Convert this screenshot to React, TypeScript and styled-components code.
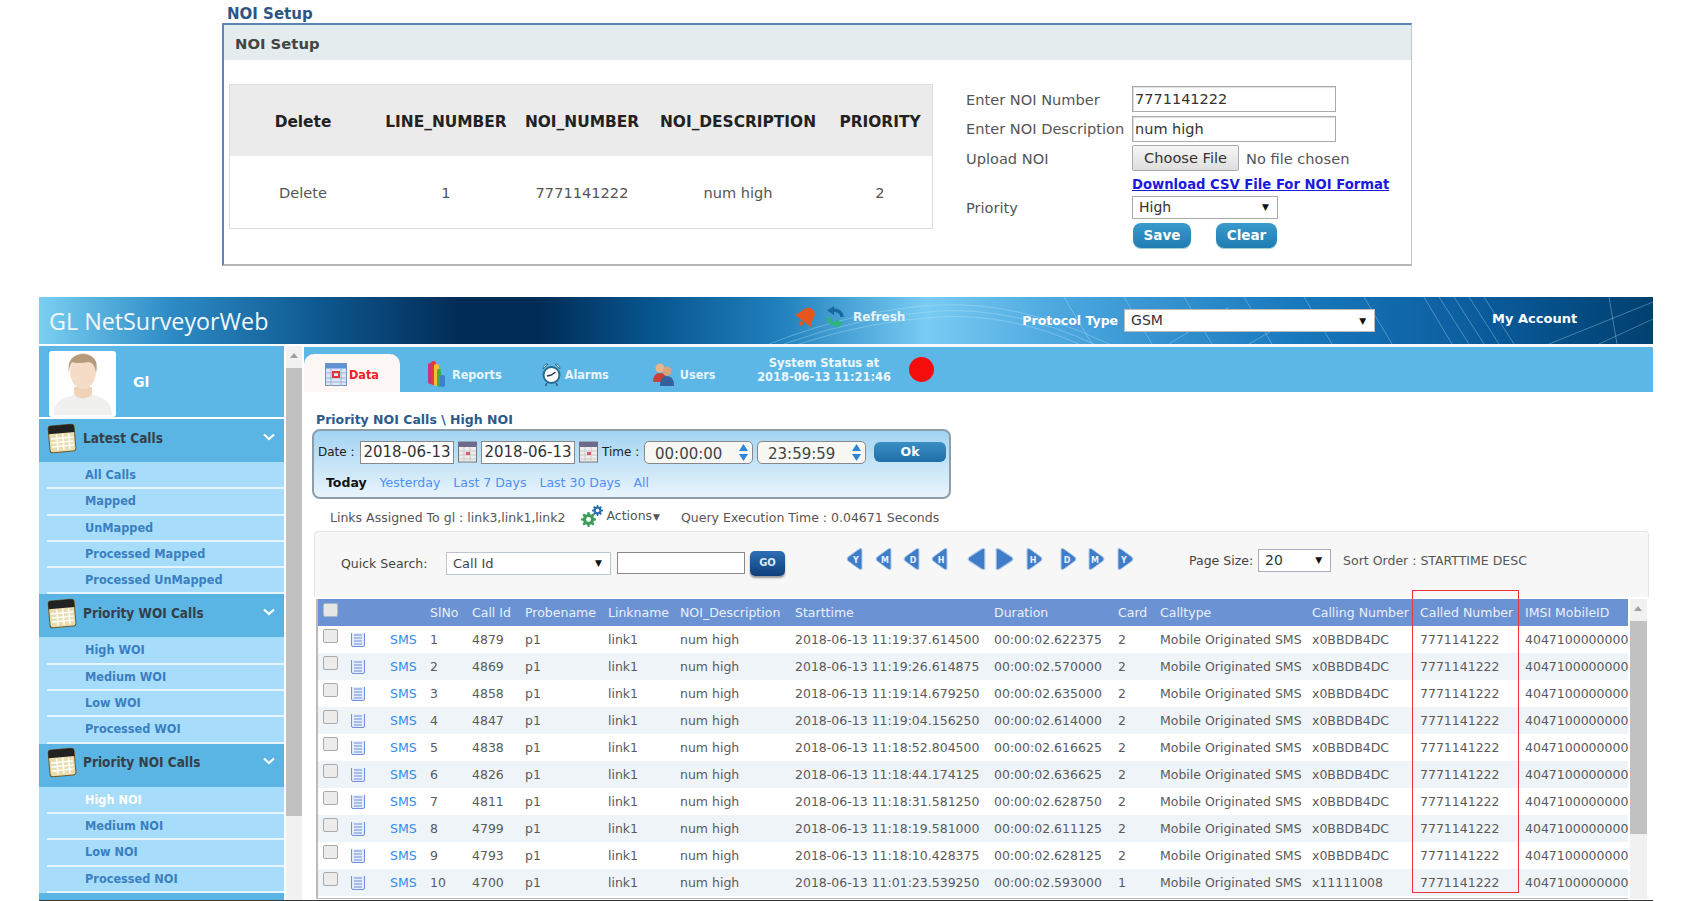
import styled, { createGlobalStyle } from 'styled-components'
import { ReactNode } from 'react'

const GlobalStyle = createGlobalStyle`
  html, body {
    margin: 0;
    padding: 0;
    height: 901px;
    overflow: hidden;
    background: #fff;
    font-family: "DejaVu Sans", Verdana, sans-serif;
    color: #555;
  }
  * { box-sizing: border-box; }
`

const condensed = '"DejaVu Sans Condensed", "DejaVu Sans", sans-serif'

const rows = [
  ['1', '4879', '11:19:37.614500', '02.622375', '2', 'x0BBDB4DC'],
  ['2', '4869', '11:19:26.614875', '02.570000', '2', 'x0BBDB4DC'],
  ['3', '4858', '11:19:14.679250', '02.635000', '2', 'x0BBDB4DC'],
  ['4', '4847', '11:19:04.156250', '02.614000', '2', 'x0BBDB4DC'],
  ['5', '4838', '11:18:52.804500', '02.616625', '2', 'x0BBDB4DC'],
  ['6', '4826', '11:18:44.174125', '02.636625', '2', 'x0BBDB4DC'],
  ['7', '4811', '11:18:31.581250', '02.628750', '2', 'x0BBDB4DC'],
  ['8', '4799', '11:18:19.581000', '02.611125', '2', 'x0BBDB4DC'],
  ['9', '4793', '11:18:10.428375', '02.628125', '2', 'x0BBDB4DC'],
  ['10', '4700', '11:01:23.539250', '02.593000', '1', 'x11111008'],
]

const menu = [
  { title: 'Latest Calls', items: ['All Calls', 'Mapped', 'UnMapped', 'Processed Mapped', 'Processed UnMapped'] },
  { title: 'Priority WOI Calls', items: ['High WOI', 'Medium WOI', 'Low WOI', 'Processed WOI'] },
  { title: 'Priority NOI Calls', items: ['High NOI', 'Medium NOI', 'Low NOI', 'Processed NOI'] },
]

function CalendarIcon() {
  return (
    <svg width="30" height="32" viewBox="0 0 30 32">
      <g transform="rotate(-5 15 16)">
        <rect x="2" y="3" width="26" height="27" rx="3" fill="#e9dcae" stroke="#6b5a2c" />
        <path d="M2 11V6q0-3 3-3h20q3 0 3 3v5z" fill="#222" />
        <path d="M4 16h22M4 20h22M4 24h22M10 12v16M16 12v16M22 12v16" stroke="#fff" strokeWidth="1.4" />
      </g>
    </svg>
  )
}

function Avatar() {
  return (
    <svg width="67" height="66" viewBox="0 0 67 66">
      <path d="M5 64q0-16 16-19l8-3h10l8 3q15 3 16 19z" fill="#f0f0ee" />
      <path d="M25 36h18v7q-9 9-18 0z" fill="#efd2b8" />
      <ellipse cx="34" cy="20" rx="13" ry="18" fill="#f5dcc6" />
      <path d="M20 22q-3-18 14-19 17 1 13 19-1-10-7-11-12 2-17 0-3 4-3 11z" fill="#b59a7c" />
    </svg>
  )
}

function BellIcon() {
  return (
    <svg width="25" height="24" viewBox="0 0 25 24">
      <g transform="rotate(38 12 12)" fill="#e8551c">
        <path d="M12 2q6 0 7 8 .5 4 3 7H2q2.500-3 3-7 1-8 7-8z" />
        <circle cx="12" cy="20" r="2.200" />
      </g>
    </svg>
  )
}

function RefreshIcon() {
  return (
    <svg width="20" height="22" viewBox="0 0 20 22" fill="none">
      <path d="M17 11a7 7 0 0 0-9-6.500" stroke="#17689f" strokeWidth="3.400" />
      <path d="M9 0L2 4.500 9 9z" fill="#17689f" />
      <path d="M3 11a7 7 0 0 0 9 6.500" stroke="#2fb57a" strokeWidth="3.400" />
      <path d="M11 22l7-4.500L11 13z" fill="#2fb57a" />
    </svg>
  )
}

function DataIcon() {
  return (
    <svg width="22" height="23" viewBox="0 0 22 23">
      <rect x="0.5" y="0.5" width="21" height="22" fill="#dbe7f6" stroke="#7c93b5" />
      <rect x="0.5" y="0.5" width="21" height="5" fill="#5f93d6" />
      <path d="M1 10h20M1 15h20M1 19h20M6 5v18M16 5v18" stroke="#9fb5d3" />
      <rect x="8" y="9" width="6" height="5" fill="none" stroke="#e03535" strokeWidth="2" />
    </svg>
  )
}

function ReportsIcon() {
  return (
    <svg width="19" height="28" viewBox="0 0 19 28">
      <rect x="1" y="3" width="5" height="21" rx="2" fill="#c8357c" />
      <rect x="4" y="1" width="5" height="24" rx="2" fill="#e53a3a" />
      <rect x="7" y="4" width="5" height="22" rx="2" fill="#f2c230" />
      <rect x="10" y="9" width="4" height="18" rx="2" fill="#46a84a" />
      <rect x="13" y="15" width="5" height="12" rx="2" fill="#3f7fd0" />
    </svg>
  )
}

function AlarmIcon() {
  return (
    <svg width="19" height="25" viewBox="0 0 19 25">
      <path d="M1 7q0-5 5-5zM18 7q0-5-5-5z" fill="#d8eef8" stroke="#2a5f80" strokeWidth=".8" />
      <circle cx="9.500" cy="13" r="8" fill="#fff" stroke="#2a6a8c" strokeWidth="2" />
      <path d="M9.500 13l-4.500 1M9.500 13l4-3" stroke="#1f3f58" strokeWidth="1.500" fill="none" />
      <path d="M5 21l-1.500 3M14 21l1.500 3" stroke="#2a5f80" strokeWidth="1.600" />
    </svg>
  )
}

function UsersIcon() {
  return (
    <svg width="23" height="24" viewBox="0 0 23 24">
      <circle cx="8" cy="6" r="4.5" fill="#e8b48e" />
      <path d="M1 20q0-9 7-9t7 9z" fill="#c9403b" />
      <circle cx="15" cy="9" r="4.5" fill="#d9a27a" />
      <path d="M8 24q0-10 7-10t7 10z" fill="#34609e" />
    </svg>
  )
}

function Gear({ size, fill }: { size: number; fill: string }) {
  return (
    <svg width={size} height={size} viewBox="0 0 16 16">
      <path
        d="M7 0h2l.4 2.2 1.5.6L12.800 1.500l1.600 1.600-1.300 1.900.6 1.500L16 7v2l-2.300.4-.6 1.500 1.300 1.900-1.600 1.600-1.900-1.300-1.500.6L9 16H7l-.4-2.300-1.500-.6-1.900 1.300-1.600-1.600 1.300-1.900-.6-1.500L0 9V7l2.300-.4.6-1.500-1.300-1.900 1.600-1.600 1.900 1.300 1.500-.6z"
        fill={fill}
      />
      <circle cx="8" cy="8" r="2.600" fill="#fff" />
    </svg>
  )
}

function DocIcon() {
  return (
    <svg width="14" height="16" viewBox="0 0 14 16">
      <rect x="0.500" y="0.500" width="13" height="15" rx="1.500" fill="#e4ebfb" stroke="#6f8fe0" />
      <path d="M3 4h8M3 7h8M3 10h8M3 13h8" stroke="#6f8fe0" />
    </svg>
  )
}

function CalPicker() {
  return (
    <svg width="19" height="22" viewBox="0 0 19 22">
      <rect x="0.500" y="1" width="18" height="20" fill="#eee" stroke="#777" />
      <rect x="0.500" y="1" width="18" height="5" fill="#6e6a8c" />
      <path d="M1 10h17M1 14h17M1 18h17M6 6v15M12 6v15" stroke="#c9c9c9" />
      <rect x="8" y="11" width="4" height="3" fill="#d45c6a" />
    </svg>
  )
}

function NavArrow({ dir, label, ml, width = 17 }: { dir: 'left' | 'right'; label?: string; ml: number; width?: number }) {
  const shape = dir === 'left' ? 'M16 2v20q-1 1-3 0L2 14q-2-2 0-4L13 2q2-1 3 0z' : 'M1 2v20q1 1 3 0l11-8q2-2 0-4L4 2Q2 1 1 2z'
  return (
    <ArrowWrap $ml={ml}>
      <svg width={width} height="24" viewBox="0 0 17 24" preserveAspectRatio="none">
        <path d={shape} fill="#3f7dc9" stroke="#b4cceb" strokeWidth="1" />
        {label && (
          <text x={dir === 'left' ? 10 : 7} y="15.500" fontSize="8" fontWeight="700" fill="#e8f1fc" textAnchor="middle" fontFamily="DejaVu Sans">
            {label}
          </text>
        )}
      </svg>
    </ArrowWrap>
  )
}

function Spinner({ value }: { value: string }) {
  return (
    <TimeBox>
      <TimeText>{value}</TimeText>
      <SpinArrows>
        <svg width="9" height="7" viewBox="0 0 10 8" preserveAspectRatio="none"><path d="M5 0l5 8H0z" fill="#2f86d8" /></svg>
        <svg width="9" height="7" viewBox="0 0 10 8" preserveAspectRatio="none"><path d="M5 8L0 0h10z" fill="#2f86d8" /></svg>
      </SpinArrows>
    </TimeBox>
  )
}

function Tab({ icon, children, $ml, $gap }: { icon: ReactNode; children: string; $ml: number; $gap: number }) {
  return (
    <TabItem $ml={$ml} $gap={$gap}>
      {icon}
      <span>{children}</span>
    </TabItem>
  )
}

export default function App() {
  return (
    <>
      <GlobalStyle />
      <SetupSection>
        <SetupHeading>NOI Setup</SetupHeading>
        <SetupPanel>
          <SetupBand>NOI Setup</SetupBand>
          <SetupBody>
            <NoiTable>
              <NoiHead>
                <span>Delete</span>
                <span>LINE_NUMBER</span>
                <span>NOI_NUMBER</span>
                <span>NOI_DESCRIPTION</span>
                <span>PRIORITY</span>
              </NoiHead>
              <NoiRow>
                <span>Delete</span>
                <span>1</span>
                <span>7771141222</span>
                <span>num high</span>
                <span>2</span>
              </NoiRow>
            </NoiTable>
            <SetupForm>
              <FormRow $h={30}>
                <FormLabel>Enter NOI Number</FormLabel>
                <FormInput>7771141222</FormInput>
              </FormRow>
              <FormRow $h={29}>
                <FormLabel>Enter NOI Description</FormLabel>
                <FormInput>num high</FormInput>
              </FormRow>
              <FormRow $h={30}>
                <FormLabel>Upload NOI</FormLabel>
                <FileButton>Choose File</FileButton>
                <FileNote>No file chosen</FileNote>
              </FormRow>
              <FormRow $h={22}>
                <FormLabel />
                <DownloadLink href="#">Download CSV File For NOI Format</DownloadLink>
              </FormRow>
              <FormRow $h={24}>
                <FormLabel>Priority</FormLabel>
                <PrioritySelect>High<Caret>▼</Caret></PrioritySelect>
              </FormRow>
              <FormRow $h={32}>
                <FormLabel />
                <PillButton $w={58}>Save</PillButton>
                <PillButton $w={61} $ml={25}>Clear</PillButton>
              </FormRow>
            </SetupForm>
          </SetupBody>
        </SetupPanel>
      </SetupSection>

      <Shell>
        <TopBar>
          <BarArt viewBox="0 0 1614 47" preserveAspectRatio="none">
            <g fill="none" stroke="#bfe6fa" strokeOpacity=".35">
              <path d="M730 47Q820 12 900 8T1070 47" />
              <path d="M745 47Q825 18 900 14T1055 47" />
              <path d="M760 47Q830 24 900 20T1040 47" />
              <path d="M1025 0l28 47M1085 0l28 47M1145 0l28 47M1205 0l28 47M1265 0l28 47M1325 0l28 47M1385 0l28 47M1400 0l30 47M1415 0l30 47M1430 0l30 47M1445 0l30 47" />
              <path d="M1130 47L1190 10M1210 47L1260 18M1510 47L1614 5M1560 47L1614 22M1570 0l8 47" />
            </g>
          </BarArt>
          <AppTitle>GL NetSurveyorWeb</AppTitle>
          <RefreshGroup>
            <BellIcon />
            <RefreshIcon />
            <RefreshText>Refresh</RefreshText>
          </RefreshGroup>
          <ProtocolLabel>Protocol Type</ProtocolLabel>
          <ProtocolSelect>GSM<Caret>▼</Caret></ProtocolSelect>
          <AccountLink>My Account</AccountLink>
        </TopBar>

        <ShellBody>
          <Sidebar>
            <UserCard>
              <AvatarFrame><Avatar /></AvatarFrame>
              <UserName>Gl</UserName>
            </UserCard>
            {menu.map((group) => (
              <MenuGroup key={group.title}>
                <GroupHeader>
                  <CalendarIcon />
                  <GroupTitle>{group.title}</GroupTitle>
                  <Chevron viewBox="0 0 12 8" width="12" height="8"><path d="M1 1.500l5 4.500 5-4.500" /></Chevron>
                </GroupHeader>
                {group.items.map((item) => (
                  <MenuItem key={item} $active={item === 'High NOI'}>{item}</MenuItem>
                ))}
              </MenuGroup>
            ))}
            <GroupHeader />
          </Sidebar>

          <SideScroll>
            <ScrollUp />
            <ScrollThumb />
          </SideScroll>

          <Main>
            <TabBar>
              <ActiveTab><DataIcon /><span>Data</span></ActiveTab>
              <Tab $ml={27} $gap={6} icon={<ReportsIcon />}>Reports</Tab>
              <Tab $ml={40} $gap={4} icon={<AlarmIcon />}>Alarms</Tab>
              <Tab $ml={43} $gap={5} icon={<UsersIcon />}>Users</Tab>
              <SystemStatus>System Status at<br />2018-06-13 11:21:46</SystemStatus>
              <StatusDot />
            </TabBar>

            <Crumb>Priority NOI Calls \ High NOI</Crumb>

            <FilterBox>
              <FilterRow>
                <FilterLabel>Date :</FilterLabel>
                <DateBox>2018-06-13</DateBox>
                <CalPicker />
                <DateBox>2018-06-13</DateBox>
                <CalPicker />
                <FilterLabel>Time :</FilterLabel>
                <Spinner value="00:00:00" />
                <Spinner value="23:59:59" />
                <OkButton>Ok</OkButton>
              </FilterRow>
              <RangeRow>
                <RangeLink $current>Today</RangeLink>
                <RangeLink>Yesterday</RangeLink>
                <RangeLink>Last 7 Days</RangeLink>
                <RangeLink>Last 30 Days</RangeLink>
                <RangeLink>All</RangeLink>
              </RangeRow>
            </FilterBox>

            <LinksRow>
              <span>Links Assigned To gl : link3,link1,link2</span>
              <GearStack>
                <GearBig><Gear size={15} fill="#3c9a5b" /></GearBig>
                <GearSmall><Gear size={11} fill="#2c6fb0" /></GearSmall>
              </GearStack>
              <ActionsText>Actions<small>▼</small></ActionsText>
              <QueryTime>Query Execution Time : 0.04671 Seconds</QueryTime>
            </LinksRow>

            <Toolbar>
              <SearchLabel>Quick Search:</SearchLabel>
              <SearchSelect>Call Id<Caret>▼</Caret></SearchSelect>
              <SearchInput />
              <GoButton>GO</GoButton>
              <NavGroup>
                <NavArrow dir="left" label="Y" ml={61} />
                <NavArrow dir="left" label="M" ml={12} />
                <NavArrow dir="left" label="D" ml={11} />
                <NavArrow dir="left" label="H" ml={11} />
                <NavArrow dir="left" ml={19} width={19} />
                <NavArrow dir="right" ml={9} width={19} />
                <NavArrow dir="right" label="H" ml={12} />
                <NavArrow dir="right" label="D" ml={17} />
                <NavArrow dir="right" label="M" ml={11} />
                <NavArrow dir="right" label="Y" ml={12} />
              </NavGroup>
              <PageLabel>Page Size:</PageLabel>
              <PageSelect>20<Caret>▼</Caret></PageSelect>
              <SortText>Sort Order : STARTTIME DESC</SortText>
            </Toolbar>

            <GridArea>
              <CallTable>
                <HeadRow>
                  <Cell><HeadCheck /></Cell>
                  <Cell />
                  <Cell />
                  <Cell>SlNo</Cell>
                  <Cell>Call Id</Cell>
                  <Cell>Probename</Cell>
                  <Cell>Linkname</Cell>
                  <Cell>NOI_Description</Cell>
                  <Cell>Starttime</Cell>
                  <Cell>Duration</Cell>
                  <Cell>Card</Cell>
                  <Cell>Calltype</Cell>
                  <Cell>Calling Number</Cell>
                  <Cell>Called Number</Cell>
                  <Cell>IMSI MobileID</Cell>
                </HeadRow>
                {rows.map(([no, id, start, dur, card, calling], i) => (
                  <DataRow key={no} $alt={i % 2 === 1}>
                    <Cell><RowCheck /></Cell>
                    <Cell><DocIcon /></Cell>
                    <SmsCell>SMS</SmsCell>
                    <Cell>{no}</Cell>
                    <Cell>{id}</Cell>
                    <Cell>p1</Cell>
                    <Cell>link1</Cell>
                    <Cell>num high</Cell>
                    <Cell>2018-06-13 {start}</Cell>
                    <Cell>00:00:{dur}</Cell>
                    <Cell>{card}</Cell>
                    <Cell>Mobile Originated SMS</Cell>
                    <Cell>{calling}</Cell>
                    <Cell>7771141222</Cell>
                    <Cell>404710000000000</Cell>
                  </DataRow>
                ))}
              </CallTable>
              <TableScroll>
                <ScrollUp />
                <TableThumb />
              </TableScroll>
              <Highlight />
            </GridArea>
          </Main>
        </ShellBody>
      </Shell>
    </>
  )
}

/* top screenshot: NOI setup */

const SetupSection = styled.section`
  margin-left: 222px;
  width: 1190px;
  height: 297px;
`

const SetupHeading = styled.div`
  height: 23px;
  padding: 6px 0 0 5px;
  font-size: 15px;
  line-height: 17px;
  font-weight: 700;
  color: #2c5684;
`

const SetupPanel = styled.div`
  height: 243px;
  border-top: 2px solid #5b86b5;
  border-left: 2px solid #5b86b5;
  border-right: 1px solid #c4c4c4;
  border-bottom: 2px solid #b5b5b5;
`

const SetupBand = styled.div`
  height: 35px;
  padding-left: 11px;
  background: #e4ecee;
  font-size: 14.8px;
  line-height: 38px;
  font-weight: 700;
  color: #444;
`

const SetupBody = styled.div`
  display: flex;
  padding: 24px 0 0 5px;
`

const NoiTable = styled.div`
  width: 704px;
  height: 145px;
  border: 1px solid #dcdcdc;
`

const noiColumns = '146px 140px 132px 180px 104px'

const NoiHead = styled.div`
  display: grid;
  grid-template-columns: ${noiColumns};
  align-items: center;
  justify-items: center;
  height: 71px;
  padding-top: 2px;
  background: #ebebeb;
  font-size: 15.4px;
  font-weight: 700;
  color: #222;
`

const NoiRow = styled(NoiHead)`
  background: transparent;
  height: 72px;
  padding-top: 0;
  font-size: 14.6px;
  font-weight: 400;
  color: #555;
`

const SetupForm = styled.div`
  margin: 0 0 0 33px;
`

const FormRow = styled.div<{ $h: number }>`
  display: flex;
  align-items: center;
  height: ${(p) => p.$h}px;
  font-size: 14.6px;
`

const FormLabel = styled.label`
  width: 166px;
  flex: none;
  color: #555;
  white-space: nowrap;
`

const FormInput = styled.div`
  width: 204px;
  height: 26px;
  padding-left: 2px;
  border: 1px solid #aaa;
  box-shadow: inset 1px 1px 1px #ddd;
  font-size: 14.5px;
  line-height: 24px;
  color: #333;
`

const FileButton = styled.div`
  width: 107px;
  height: 26px;
  border: 1px solid #aaa;
  border-radius: 2px;
  background: linear-gradient(#f6f6f6, #dedede);
  text-align: center;
  line-height: 24px;
  color: #333;
`

const FileNote = styled.span`
  margin-left: 7px;
  color: #555;
`

const DownloadLink = styled.a`
  font-weight: 700;
  font-size: 13.2px;
  color: #1a1ae0;
  white-space: nowrap;
`

const Caret = styled.span`
  position: absolute;
  right: 8px;
  top: 50%;
  transform: translateY(-50%);
  font-size: 9px;
  color: #111;
`

const PrioritySelect = styled.div`
  position: relative;
  width: 146px;
  height: 23px;
  padding-left: 6px;
  border: 1px solid #aaa;
  font-size: 14px;
  line-height: 21px;
  color: #333;
`

const PillButton = styled.div<{ $w: number; $ml?: number }>`
  width: ${(p) => p.$w}px;
  height: 25px;
  margin-left: ${(p) => p.$ml ?? 1}px;
  border-radius: 8px;
  background: linear-gradient(#3a9acb, #1f7cb2);
  box-shadow: 0 1px 1px #9cc;
  text-align: center;
  font-weight: 700;
  font-size: 13.5px;
  line-height: 24px;
  color: #fff;
`

/* bottom screenshot: call list */

const Shell = styled.div`
  margin-left: 39px;
  width: 1614px;
  height: 604px;
  overflow: hidden;
  border-bottom: 1px solid #333;
`

const TopBar = styled.header`
  position: relative;
  display: flex;
  align-items: center;
  height: 47px;
  background: linear-gradient(
    90deg,
    #7ad0f2 0,
    #2f8cc6 8%,
    #0f5a92 17%,
    #012c56 26%,
    #012c56 31%,
    #07558f 38%,
    #2181bd 46%,
    #79ccf3 55%,
    #4da8df 63%,
    #1878bd 78%,
    #0a5a9a 90%,
    #00406f 100%
  );
  color: #fff;
`

const BarArt = styled.svg`
  position: absolute;
  inset: 0;
  width: 100%;
  height: 100%;
`

const AppTitle = styled.div`
  position: relative;
  width: 225px;
  margin-left: 10px;
  font-family: "Open Sans", sans-serif;
  font-size: 23.300px;
  white-space: nowrap;
  color: #f1f8fc;
`

const RefreshGroup = styled.div`
  position: relative;
  display: flex;
  align-items: center;
  gap: 6px;
  margin: -7px 0 0 520px;
`

const RefreshText = styled.span`
  margin-left: 2px;
  font-weight: 700;
  font-size: 12px;
  color: #e4f4fb;
`

const ProtocolLabel = styled.span`
  position: relative;
  margin-left: 117px;
  font-weight: 700;
  font-size: 12.5px;
  white-space: nowrap;
`

const ProtocolSelect = styled.div`
  position: relative;
  width: 251px;
  height: 23px;
  margin-left: 6px;
  padding-left: 6px;
  border: 1px solid #bbb;
  background: #fff;
  font-size: 14px;
  line-height: 21px;
  color: #333;
`

const AccountLink = styled.span`
  position: relative;
  margin: -5px 0 0 117px;
  font-weight: 700;
  font-size: 13px;
  white-space: nowrap;
`

const ShellBody = styled.div`
  display: grid;
  grid-template-columns: 245px 20px 1fr;
  margin-top: 2px;
`

const Sidebar = styled.aside`
  display: flex;
  flex-direction: column;
  height: 555px;
  overflow: hidden;
`

const UserCard = styled.div`
  display: flex;
  align-items: center;
  flex: none;
  height: 71px;
  margin-bottom: 2px;
  padding: 4px 0 0 10px;
  background: #5db7e6;
`

const AvatarFrame = styled.div`
  display: flex;
  width: 67px;
  height: 66px;
  border-radius: 3px;
  background: #fff;
`

const UserName = styled.span`
  margin: -4px 0 0 17px;
  font-weight: 700;
  font-size: 14px;
  color: #fff;
`

const MenuGroup = styled.div`
  flex: none;
  background: #a7dcfb;
`

const GroupHeader = styled.div`
  display: flex;
  align-items: center;
  flex: none;
  height: 43px;
  margin-bottom: 1px;
  padding: 0 0 6px 8px;
  background: #5ab5e5;
`

const GroupTitle = styled.span`
  flex: 1;
  margin-left: 6px;
  font-family: ${condensed};
  font-weight: 700;
  font-size: 13.500px;
  color: #353f48;
`

const Chevron = styled.svg`
  margin: -2px 9px 0 0;
  fill: none;
  stroke: #fff;
  stroke-width: 2.200;
`

const MenuItem = styled.div<{ $active?: boolean }>`
  height: 26.300px;
  margin-left: 8px;
  padding-left: 38px;
  border-bottom: 2px solid #e6f5fe;
  font-family: ${condensed};
  font-weight: 700;
  font-size: 12.600px;
  line-height: 24.500px;
  color: ${(p) => (p.$active ? '#fff' : '#3a7fc1')};
`

const SideScroll = styled.div`
  margin-left: 2px;
  width: 16px;
  height: 555px;
  background: #f1f1f1;
`

const ScrollUp = styled.div`
  height: 22px;
  position: relative;
  &::after {
    content: '';
    position: absolute;
    left: 4px;
    top: 7px;
    border: 4px solid transparent;
    border-top: 0;
    border-bottom: 5px solid #a0a0a0;
  }
`

const ScrollThumb = styled.div`
  height: 448px;
  background: #c1c1c1;
`

const Main = styled.main`
  display: flex;
  flex-direction: column;
  min-width: 0;
`

const TabBar = styled.nav`
  display: flex;
  align-items: flex-end;
  height: 45px;
  margin-top: 1px;
  background: #5db7e6;
`

const ActiveTab = styled.div`
  display: flex;
  align-items: center;
  gap: 2px;
  width: 96px;
  height: 38px;
  padding: 2px 0 0 21px;
  border-radius: 10px 10px 0 0;
  background: #fdf7f5;
  font-family: ${condensed};
  font-weight: 700;
  font-size: 12.500px;
  color: #ee2222;
`

const TabItem = styled.div<{ $ml: number; $gap: number }>`
  display: flex;
  align-items: center;
  gap: ${(p) => p.$gap}px;
  height: 38px;
  margin-left: ${(p) => p.$ml}px;
  padding-top: 2px;
  font-family: ${condensed};
  font-weight: 700;
  font-size: 12.500px;
  color: #e6f5fd;
`

const SystemStatus = styled.div`
  width: 135px;
  align-self: center;
  margin-left: 41px;
  text-align: center;
  font-family: ${condensed};
  font-weight: 700;
  font-size: 12.700px;
  line-height: 14px;
  white-space: nowrap;
  color: #eef8fd;
`

const StatusDot = styled.div`
  width: 25px;
  height: 25px;
  align-self: center;
  margin: 0 0 0 17px;
  border-radius: 50%;
  background: #f50d0d;
`

const Crumb = styled.div`
  margin: 19px 0 0 12px;
  height: 18px;
  font-weight: 700;
  font-size: 12.500px;
  line-height: 17px;
  color: #2c5a8c;
`

const FilterBox = styled.div`
  width: 639px;
  height: 70px;
  margin-left: 8px;
  padding: 9px 0 0 4px;
  border: 2px solid #8d9eaa;
  border-radius: 8px;
  background: linear-gradient(#a3d4f3, #e9f4fb);
`

const FilterRow = styled.div`
  display: flex;
  align-items: center;
  gap: 4px;
  height: 24px;
`

const FilterLabel = styled.span`
  width: 36px;
  font-size: 12px;
  margin-right: 2px;
  color: #222;
  white-space: nowrap;
`

const DateBox = styled.div`
  width: 94px;
  height: 23px;
  border: 1px solid #888;
  background: #fff;
  text-align: center;
  font-size: 15px;
  line-height: 21px;
  color: #333;
`

const TimeBox = styled.div`
  display: flex;
  align-items: center;
  justify-content: space-between;
  width: 109px;
  height: 23px;
  padding: 0 4px 0 10px;
  border: 1px solid #888;
  border-radius: 5px;
  background: #f7f8f4;
`

const TimeText = styled.span`
  padding-top: 4px;
  font-size: 15px;
  color: #444;
`

const SpinArrows = styled.div`
  display: flex;
  flex-direction: column;
  gap: 3px;
  svg { display: block; }
`

const OkButton = styled.div`
  width: 72px;
  height: 20px;
  margin-left: 4px;
  border-radius: 6px;
  background: linear-gradient(#3b8fc4, #1f6ea8);
  text-align: center;
  font-weight: 700;
  font-size: 12.500px;
  line-height: 19px;
  color: #fff;
`

const RangeRow = styled.div`
  display: flex;
  gap: 13px;
  margin: 11px 0 0 8px;
  font-size: 12.500px;
`

const RangeLink = styled.span<{ $current?: boolean }>`
  font-weight: ${(p) => (p.$current ? 700 : 400)};
  color: ${(p) => (p.$current ? '#111' : '#4f8ff7')};
`

const LinksRow = styled.div`
  display: flex;
  align-items: center;
  height: 32px;
  padding: 4px 0 0 26px;
  font-size: 12.500px;
  color: #555;
  white-space: nowrap;
`

const GearStack = styled.div`
  position: relative;
  width: 24px;
  height: 22px;
  margin: -3px 0 0 16px;
`

const GearBig = styled.div`
  position: absolute;
  left: 0;
  bottom: 0;
  line-height: 0;
`

const GearSmall = styled.div`
  position: absolute;
  left: 11px;
  top: 0;
  line-height: 0;
`

const ActionsText = styled.span`
  margin: -4px 0 0 1px;
  small { margin-left: 1px; font-size: 9px; }
`

const QueryTime = styled.span`
  margin-left: 21px;
`

const Toolbar = styled.div`
  display: flex;
  align-items: center;
  flex: none;
  width: 1335px;
  height: 66px;
  margin-left: 10px;
  padding: 0 0 3px 26px;
  border: 1px solid #e6e6e6;
  border-bottom: 0;
  border-radius: 4px 4px 0 0;
  background: #f7f7f7;
  font-size: 12.500px;
  white-space: nowrap;
`

const SearchLabel = styled.span`
  width: 105px;
  color: #444;
`

const SearchSelect = styled.div`
  position: relative;
  width: 165px;
  height: 23px;
  padding-left: 6px;
  border: 1px solid #bdc6d0;
  background: #fff;
  font-size: 13px;
  line-height: 21px;
  color: #444;
`

const SearchInput = styled.div`
  width: 128px;
  height: 22px;
  margin-left: 6px;
  border: 1px solid #888;
  background: #fff;
`

const GoButton = styled.div`
  width: 35px;
  height: 25px;
  margin-left: 5px;
  border-radius: 5px;
  background: linear-gradient(#2d6fb4, #0e3f7c);
  box-shadow: 0 2px 2px #999;
  text-align: center;
  font-weight: 700;
  font-size: 10px;
  line-height: 24px;
  color: #dce9f7;
`

const NavGroup = styled.div`
  display: flex;
  margin-bottom: 8px;
`

const ArrowWrap = styled.div<{ $ml: number }>`
  margin-left: ${(p) => p.$ml}px;
  line-height: 0;
`

const PageLabel = styled.span`
  margin: -6px 0 0 55px;
  color: #444;
`

const PageSelect = styled.div`
  position: relative;
  width: 73px;
  height: 23px;
  margin: -6px 0 0 5px;
  padding-left: 6px;
  border: 1px solid #aab;
  background: #fff;
  font-size: 14px;
  line-height: 21px;
  color: #333;
`

const SortText = styled.span`
  margin: -6px 0 0 12px;
  color: #555;
`

const GridArea = styled.div`
  position: relative;
  display: flex;
  align-items: flex-start;
  margin: 2px 0 0 12px;
`

const CallTable = styled.div`
  width: 1312px;
  height: 300px;
  border-left: 2px solid #bbb;
  border-bottom: 1px solid #bbb;
  overflow: hidden;
`

const tableColumns = '33px 39px 40px 42px 53px 83px 72px 115px 199px 124px 42px 152px 108px 105px 103px'

const HeadRow = styled.div`
  display: grid;
  grid-template-columns: ${tableColumns};
  align-items: center;
  height: 27px;
  background: #6b92d3;
  font-size: 12.500px;
  color: #e9f0fa;
`

const DataRow = styled(HeadRow)<{ $alt: boolean }>`
  background: ${(p) => (p.$alt ? '#eff4f9' : '#fff')};
  color: #5a5a5a;
`

const Cell = styled.div`
  min-width: 0;
  overflow: hidden;
  white-space: nowrap;
  line-height: 16px;
  & > svg { display: block; margin-top: -2px; }
`

const SmsCell = styled(Cell)`
  color: #2f8cf0;
`

const HeadCheck = styled.div`
  width: 15px;
  height: 14px;
  margin: 0 0 6px 5px;
  border: 1px solid #aab8cc;
  border-radius: 2px;
  background: #e6e6e6;
`

const RowCheck = styled(HeadCheck)`
  margin-bottom: 8px;
  border: 1px solid #aaa;
  background: #ececec;
`

const TableScroll = styled.div`
  width: 17px;
  height: 300px;
  margin-left: 2px;
  background: #f1f1f1;
`

const TableThumb = styled.div`
  height: 213px;
  background: #c1c1c1;
`

const Highlight = styled.div`
  position: absolute;
  left: 1096px;
  top: -9px;
  width: 107px;
  height: 303px;
  border: 1.500px solid #e8343c;
`
